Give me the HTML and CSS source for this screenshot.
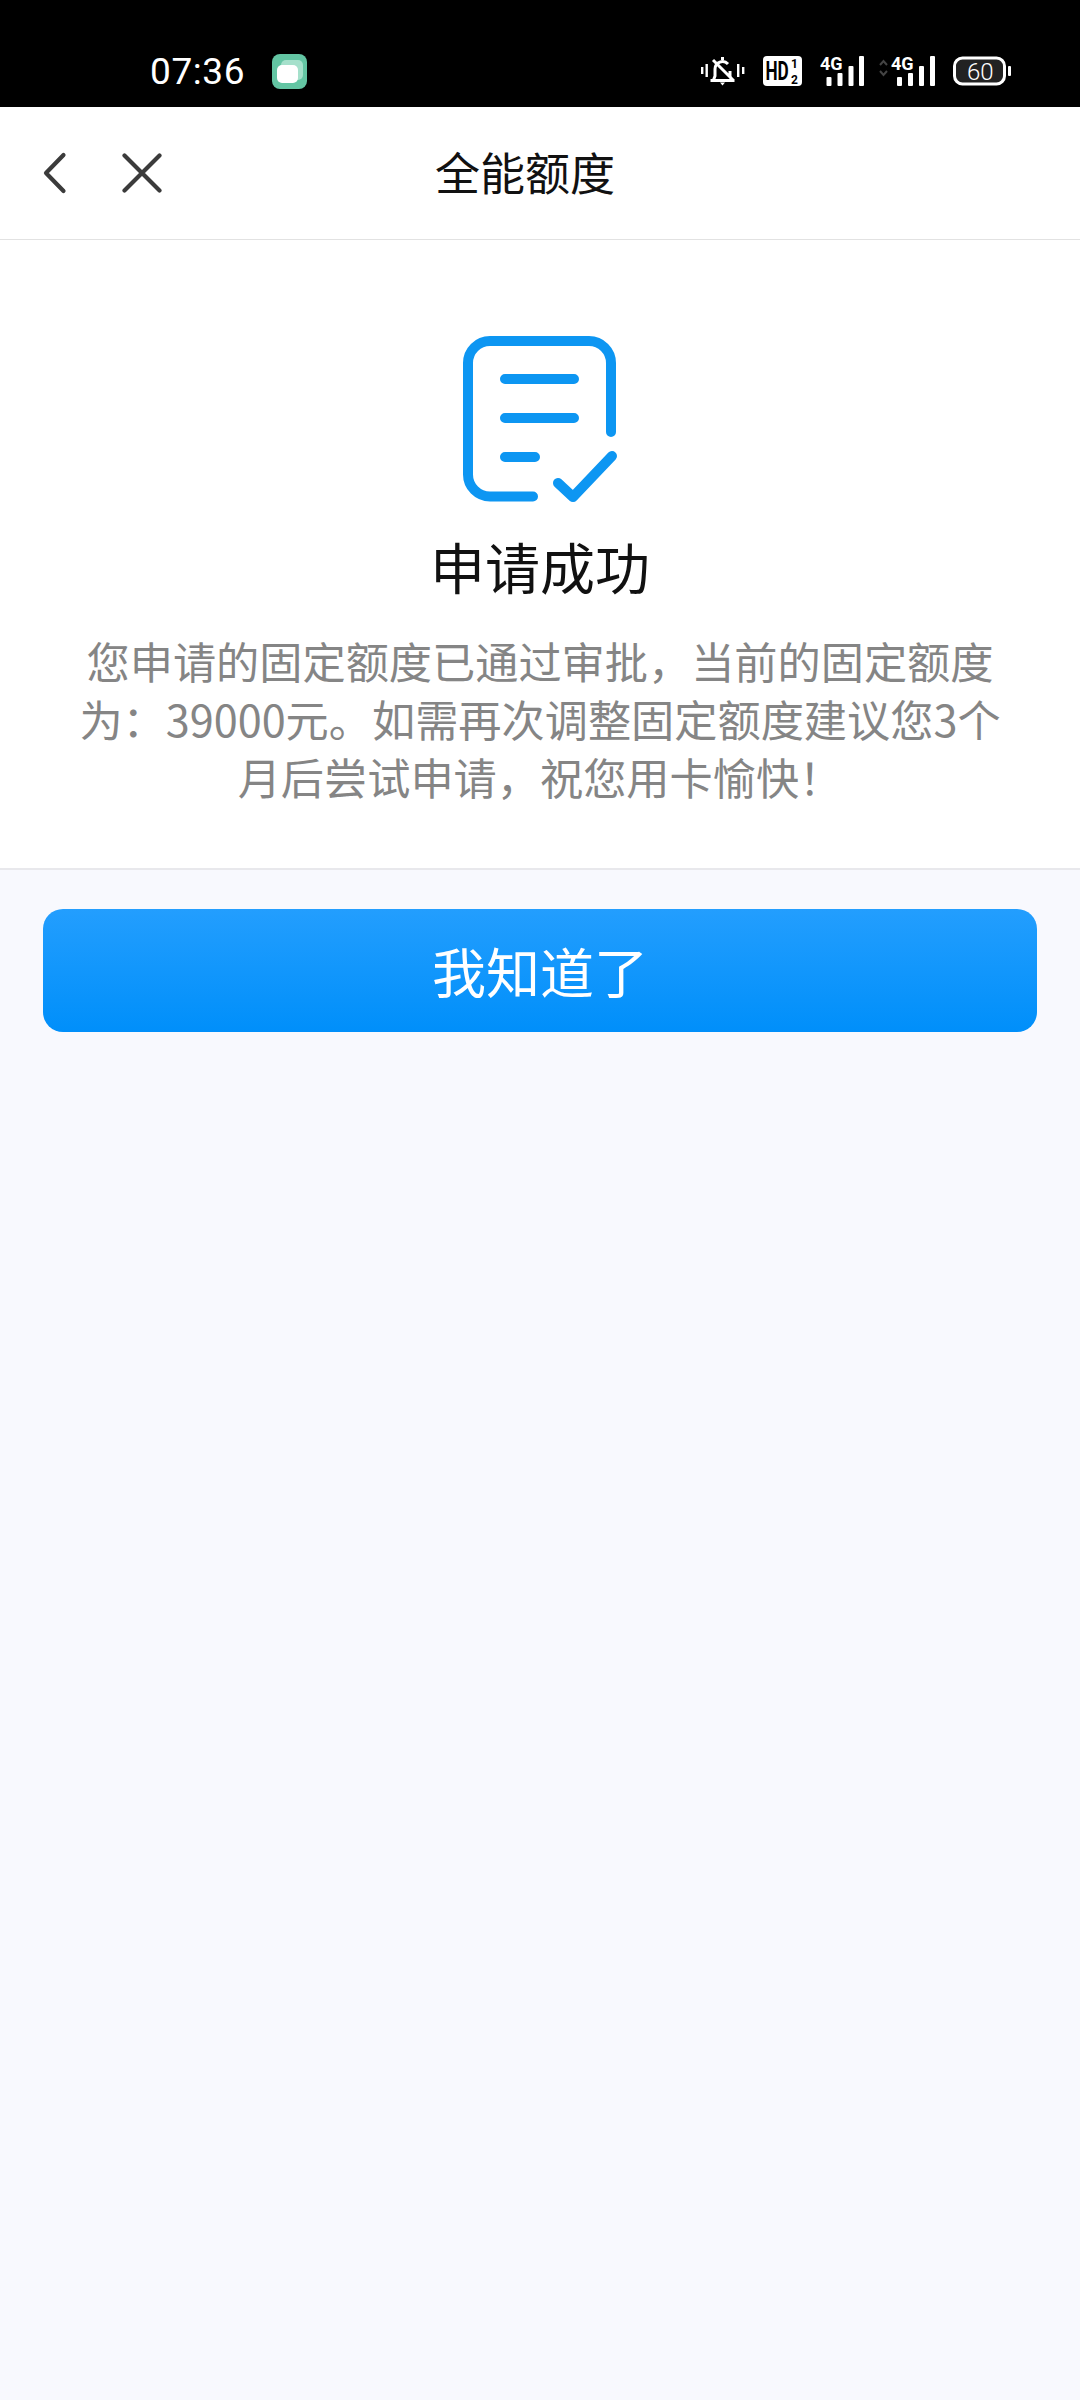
FILE: index.html
```html
<!DOCTYPE html>
<html lang="zh-CN">
<head>
<meta charset="utf-8">
<title>全能额度</title>
<link rel="stylesheet" href="styles.css">
</head>
<body>
<div class="page">
  <div class="status">
    <span class="time">07:36</span>
    <svg class="app" viewBox="0 0 35 35"><rect width="35" height="35" rx="8" fill="#63c5a3"/><rect x="9" y="6" width="22" height="20" rx="5" fill="#a5e0cb"/><rect x="5" y="11" width="21" height="18" rx="5" fill="#fff"/></svg>
    <div class="status-right">
      <svg class="i-bell" viewBox="0 0 45 30">
        <g fill="#fff"><rect x="1" y="11" width="2.400" height="7"/><rect x="5.500" y="8" width="2.400" height="13"/><rect x="37" y="8" width="2.400" height="13"/><rect x="42" y="11" width="2.400" height="7"/></g>
        <path d="M10.500 24.500h24M13.500 24l1.500-4v-7a7.500 7.500 0 0 1 13-5M30 15v5l1.500 4M22.500 1v3M13 4l20 20" fill="none" stroke="#fff" stroke-width="3"/>
        <path d="M20 26.500h5l-2.500 3z" fill="#fff"/>
      </svg>
      <svg class="i-hd" viewBox="0 0 39 30"><rect width="39" height="30" rx="4" fill="#fff"/><text transform="translate(2.500 24) scale(.66 1)" class="hd">HD</text><text x="28" y="12" class="hds">1</text><text x="28" y="27.500" class="hds">2</text></svg>
      <svg class="i-sig i-sig1" viewBox="0 -6 44 36"><text x="0" y="14" class="g4">4G</text><g fill="#fff"><rect x="6.500" y="21" width="5" height="9" rx="1"/><rect x="17.500" y="17" width="5" height="13" rx="1"/><rect x="28.500" y="10" width="5" height="20" rx="1"/><rect x="39" y="0" width="5" height="30" rx="1"/></g></svg>
      <svg class="i-sig i-sig2" viewBox="0 -6 57 36"><path d="M2 9l3.500-4 3.500 4M2 15l3.500 4 3.500-4" fill="none" stroke="#444" stroke-width="2"/><text x="13" y="14" class="g4">4G</text><g fill="#fff"><rect x="19" y="21" width="5" height="9" rx="1"/><rect x="30" y="17" width="5" height="13" rx="1"/><rect x="41" y="10" width="5" height="20" rx="1"/><rect x="52" y="0" width="5" height="30" rx="1"/></g></svg>
      <svg class="i-bat" viewBox="0 0 58 30"><rect x="1.500" y="2" width="50" height="26" rx="8" fill="#222" stroke="#fff" stroke-width="3"/><text x="14" y="24" class="bat">60</text><rect x="55" y="10" width="3" height="10" rx="1" fill="#fff"/></svg>
    </div>
  </div>
  <header class="nav">
    <svg class="back" viewBox="0 0 24 42"><path d="M20.500 3 3 21l17.500 18" fill="none" stroke="#3b3b3b" stroke-width="4.200" stroke-linecap="round" stroke-linejoin="round"/></svg>
    <svg class="close" viewBox="0 0 40 42"><path d="M2.500 3.500l35 35M37.500 3.500l-35 35" fill="none" stroke="#3b3b3b" stroke-width="4.200" stroke-linecap="round"/></svg>
    <h1 class="title">全能额度</h1>
  </header>
  <section class="result">
    <svg class="doc" viewBox="0 0 160 170">
      <g fill="none" stroke="#0d96f2" stroke-width="10" stroke-linecap="round" stroke-linejoin="round">
        <path d="M73 163.500H30a22 22 0 0 1-22-22V30A22 22 0 0 1 30 8h99a22 22 0 0 1 22 22v69"/>
        <path d="M45 46h69M45 85h69M45 124h30"/>
        <path d="M98 150l15 14 39-41"/>
      </g>
    </svg>
    <h2 class="headline">申请成功</h2>
    <p class="desc">您申请的固定额度已通过审批&#65292;当前的固定额度为&#65306;39000元。如需再次调整固定额度建议您3个月后尝试申请&#65292;祝您用卡愉快&#65281;</p>
  </section>
  <div class="actions">
    <button class="primary">我知道了</button>
  </div>
</div>
</body>
</html>
```

FILE: styles.css
```css
* { box-sizing: border-box; }
html, body { margin: 0; padding: 0; }
body { font-family: "Noto Sans CJK SC", "Roboto", sans-serif; background: #f8f9fe; }
.page { width: 1080px; height: 2400px; background: #f8f9fe; overflow: hidden; }

.status { height: 107px; background: #000; display: flex; align-items: center; padding: 35px 69px 0 150px; }
.time { font-family: "Roboto", sans-serif; font-size: 37px; font-weight: 400; color: #fff; line-height: 1; letter-spacing: 0.6px; }
.app { width: 35px; height: 35px; margin-left: 27px; }
.status-right { margin-left: auto; margin-bottom: 6px; display: flex; align-items: flex-end; gap: 18px; }
.status-right svg { height: 30px; display: block; }
.status-right .i-sig { height: 36px; }
.i-bell { width: 45px; }
.i-hd { width: 39px; }
.i-sig1 { width: 44px; }
.i-sig2 { width: 57px; margin-left: -4px; }
.i-bat { width: 58px; }
.hd { font: 700 26px "Roboto", sans-serif; fill: #000; }
.hds { font: 700 12px "Roboto", sans-serif; fill: #000; }
.g4 { font: 700 18px "Roboto", sans-serif; fill: #fff; }
.bat { font: 300 24px "Roboto", sans-serif; fill: #fff; }

.nav { height: 133px; background: #fff; border-bottom: 1px solid #e2e2e2; display: flex; align-items: center; padding: 0 0 0 43px; }
.back { width: 24px; height: 42px; }
.close { width: 40px; height: 42px; margin-left: 55px; }
.title { margin: 0 0 4px 273px; font-size: 45px; font-weight: 400; color: #111; line-height: 1; }

.result { background: #fff; height: 630px; border-bottom: 2px solid #e8e8ec; display: flex; flex-direction: column; align-items: center; padding-top: 93px; }
.doc { width: 160px; height: 170px; display: block; }
.headline { margin: 24px 0 0; font-size: 55px; font-weight: 400; color: #111; line-height: 76px; }
.desc { margin: 28px 0 0; width: 940px; font-size: 43.200px; line-height: 58px; color: #858585; text-align: center; }

.actions { padding: 39px 43px 0; }
.primary { display: block; width: 994px; height: 123px; border: 0; border-radius: 20px; background: linear-gradient(#239efe, #008ffa); color: #fff; font-family: inherit; font-size: 54px; }
```
